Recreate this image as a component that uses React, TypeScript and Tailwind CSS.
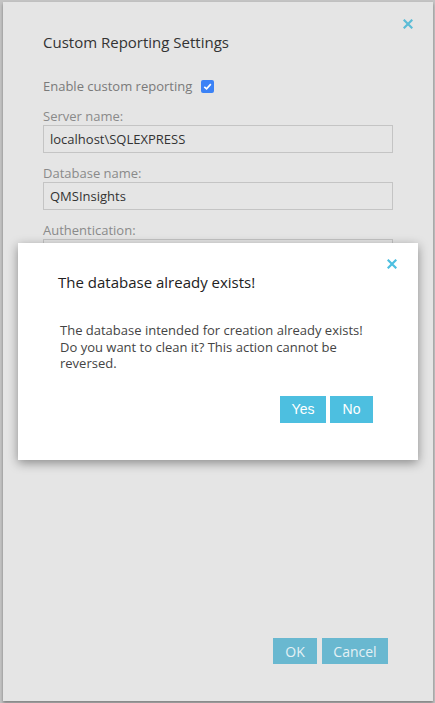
import React from "react";

const font = { fontFamily: '"Open Sans", "Noto Sans", Arial, sans-serif' };

function CloseX({ className }: { className?: string }) {
  return (
    <svg viewBox="0 0 10 10" className={className} aria-hidden>
      <path d="M1.5 1.5 L8.5 8.5 M8.5 1.5 L1.5 8.5" stroke="currentColor" strokeWidth="2.2" strokeLinecap="square" />
    </svg>
  );
}

function Field({ label, value }: { label: string; value?: string }) {
  return (
    <div className="flex flex-col">
      <div className="text-[13px] leading-[18px] text-[#8a8a8a]">{label}</div>
      <div className="h-[28px] w-[350px] border border-[#c4c4c4] bg-[#e5e5e5] pl-[6px] text-[13px] leading-[26px] text-[#333]">
        {value}
      </div>
    </div>
  );
}

export default function App() {
  return (
    <div className="relative h-[703px] w-[435px] overflow-hidden bg-[#c4c4c4]" style={font}>
      <div className="relative mx-[3px] mt-[2px] flex h-[699px] w-[430px] flex-col bg-[#e5e5e5] shadow-[0_2px_3px_rgba(0,0,0,0.35)]">
        <div className="flex justify-end pr-[20px] pt-[17px]">
          <CloseX className="h-[10px] w-[10px] text-[#5bbcd6]" />
        </div>
        <div className="pl-[40px]">
          <div className="mt-[3px] text-[15px] leading-[20px] text-[#333]">Custom Reporting Settings</div>
          <div className="mt-[25px] flex items-center text-[13px] leading-[18px] text-[#7a7a7a]">
            <span>Enable custom reporting</span>
            <span className="ml-[9px] flex h-[13px] w-[13px] items-center justify-center rounded-[2px] bg-[#3b82f6]">
              <svg viewBox="0 0 12 12" className="h-[11px] w-[11px]">
                <path d="M2.5 6.3 L5 8.6 L9.6 3.4" fill="none" stroke="white" strokeWidth="1.8" />
              </svg>
            </span>
          </div>
          <div className="mt-[12px] flex flex-col gap-[11px]">
            <Field label="Server name:" value="localhost\SQLEXPRESS" />
            <Field label="Database name:" value="QMSInsights" />
            <Field label="Authentication:" />
          </div>
        </div>
        <div className="mt-auto mb-[37px] flex justify-end gap-[5px] pr-[45px]">
          <div className="flex h-[26px] w-[44px] items-center justify-center bg-[#69b8d0] text-[14px] text-[#e4f1f5]">OK</div>
          <div className="flex h-[26px] w-[66px] items-center justify-center bg-[#69b8d0] text-[14px] text-[#e4f1f5]">Cancel</div>
        </div>

        <div className="absolute left-[15px] top-[241px] flex h-[217px] w-[400px] flex-col bg-white shadow-[0_3px_10px_rgba(0,0,0,0.4)]">
          <div className="flex justify-end pr-[21px] pt-[16px]">
            <CloseX className="h-[10px] w-[10px] text-[#4dbfe0]" />
          </div>
          <div className="pl-[40px] pt-[3px] text-[15px] leading-[20px] text-[#222]">The database already exists!</div>
          <div className="mt-[30px] pl-[42px] pr-[30px] text-[13px] leading-[16.5px] text-[#444]">
            The database intended for creation already exists!
            <br />
            Do you want to clean it? This action cannot be
            <br />
            reversed.
          </div>
          <div className="mt-[24px] flex justify-end gap-[4px] pr-[45px]" style={{ fontFamily: '"Liberation Sans", Arial, sans-serif' }}>
            <div className="flex h-[27px] w-[46px] items-center justify-center bg-[#4dbfe0] text-[14px] text-white">Yes</div>
            <div className="flex h-[27px] w-[43px] items-center justify-center bg-[#4dbfe0] text-[14px] text-white">No</div>
          </div>
        </div>
      </div>
    </div>
  );
}
